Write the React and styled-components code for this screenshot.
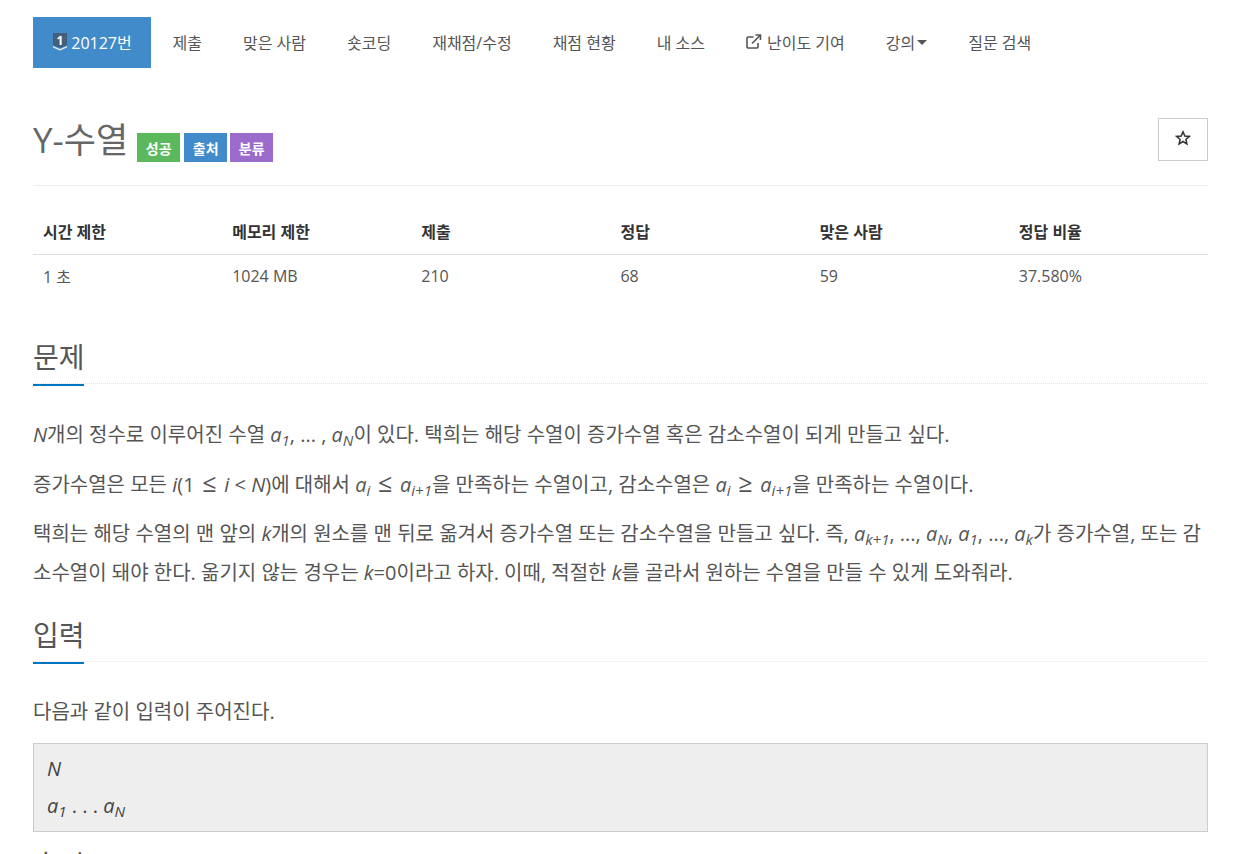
import styled, { createGlobalStyle } from "styled-components";

const GlobalStyle = createGlobalStyle`
    html, body {
        margin: 0;
        padding: 0;
        background: #fff;
        overflow: hidden;
    }
    body {
        font-family: "Open Sans", "Noto Sans CJK KR", sans-serif;
        color: #555;
        font-size: 20px;
    }
`;

const Page = styled.div`
    width: 1257px;
    height: 854px;
    overflow: hidden;
    padding: 17px 49px 0 33px;
    box-sizing: border-box;
`;

const Nav = styled.nav`
    display: flex;
    height: 51px;
    align-items: center;
`;

const Brand = styled.a`
    display: flex;
    align-items: center;
    justify-content: center;
    gap: 3px;
    width: 118px;
    height: 51px;
    margin-right: 1px;
    padding-bottom: 2px;
    box-sizing: border-box;
    background: #428bca;
    color: #fff;
    font-size: 16px;
`;

const NavItem = styled.a`
    display: flex;
    align-items: center;
    gap: ${({ $gap }) => $gap || 0}px;
    padding: 0 20.5px 2px;
    font-size: 16px;
    color: #555;
    white-space: nowrap;
`;

const Caret = styled.span`
    display: inline-block;
    margin-left: 2px;
    margin-top: 2px;
    border-top: 5px solid #555;
    border-left: 5px solid transparent;
    border-right: 5px solid transparent;
`;

const TitleRow = styled.div`
    display: flex;
    align-items: flex-end;
    margin-top: 49px;
    padding-bottom: 23px;
    border-bottom: 1px solid #eee;
`;

const Title = styled.h1`
    margin: 0 9px 0 0;
    font-size: 35px;
    line-height: 45px;
    font-weight: 400;
    color: #666;
`;

const Label = styled.span`
    display: flex;
    align-items: center;
    justify-content: center;
    width: 43px;
    height: 29px;
    margin-right: 3px;
    font-size: 14px;
    font-weight: 700;
    color: #fff;
    background: ${({ $color }) => $color};

    &:nth-child(2) {
        margin-right: 4px;
    }
`;

const StarButton = styled.button`
    display: flex;
    align-items: center;
    justify-content: center;
    width: 50px;
    height: 43px;
    margin-left: auto;
    margin-bottom: 1px;
    padding: 0 0 3px;
    background: #fff;
    border: 1px solid #ccc;
    color: #333;
`;

const InfoTable = styled.table`
    width: 100%;
    margin-top: 21px;
    border-collapse: collapse;
    table-layout: fixed;
    font-size: 16px;
    color: #555;

    th, td {
        padding: 0 10px;
        text-align: left;
    }
    th {
        height: 47px;
        color: #333;
        font-weight: 700;
        border-bottom: 1px solid #ddd;
    }
    td {
        height: 42px;
    }
`;

const NarrowCol = styled.col`
    width: 189px;
`;

const WideCol = styled.col`
    width: 199px;
`;

const Section = styled.section`
    margin-top: ${({ $top }) => $top}px;
`;

const Heading = styled.div`
    border-bottom: 1px dotted #e5e5e5;
    height: 43px;
    margin-bottom: 31px;
    position: relative;

    &::after {
        content: "";
        position: absolute;
        left: 0;
        bottom: -3px;
        width: 51px;
        height: 2px;
        background: #0076c0;
    }
`;

const HeadingText = styled.h2`
    margin: 0;
    font-size: 28px;
    line-height: 35px;
    font-weight: 400;
    color: #555;
`;

const Para = styled.p`
    margin: 0 0 10px;
    font-size: 20px;
    line-height: 39px;
    color: #555;
    white-space: nowrap;
`;

const LeadPara = styled(Para)`
    margin-bottom: 11px;
`;

const InputLine = styled(Para)`
    line-height: 37px;
    margin-bottom: 13px;
`;

const Math = styled.i`
    font-style: italic;
`;

const Sub = styled.sub`
    font-size: 15px;
    font-style: italic;
    line-height: 0;
    vertical-align: -4px;
`;

const Rel = styled.span`
    margin: 0 2.5px;
    font-size: 25px;
    line-height: 0;
`;

const Formula = styled.div`
    background: #eee;
    border: 1px solid #ccc;
    padding: 6px 13px 7px;
    margin-top: 12px;
    font-size: 20px;
    line-height: 37px;
    color: #444;
`;

function TierIcon() {
    return (
        <svg width="16" height="18" viewBox="0 0 16 18">
            <path d="M1 0h14v12l-7 3-7-3z" fill="#435f7a" />
            <path d="M1 13l7 3 7-3v1.5l-7 3-7-3z" fill="#e6ebf0" />
            <text x="8" y="11.5" textAnchor="middle" fontSize="12" fontWeight="700" fill="#fff" fontFamily="Open Sans">1</text>
        </svg>
    );
}

function LinkIcon() {
    return (
        <svg width="16" height="15" viewBox="0 0 16 15" fill="none" stroke="#555" strokeWidth="1.6">
            <path d="M7.5 3H2.5A1.5 1.5 0 0 0 1 4.5v8A1.5 1.5 0 0 0 2.5 14h8a1.5 1.5 0 0 0 1.5-1.5V9" />
            <path d="M6 9.5L14 1.5M9.5 1h5v5" />
        </svg>
    );
}

function StarIcon() {
    return (
        <svg width="16" height="16" viewBox="0 0 16 16" fill="none" stroke="#333" strokeWidth="1.5">
            <path d="M8 1.8l1.8 4.2 4.5.4-3.4 3 1 4.5L8 11.5l-3.9 2.4 1-4.5-3.4-3 4.5-.4z" />
        </svg>
    );
}

const menu = ["제출", "맞은 사람", "숏코딩", "재채점/수정", "채점 현황", "내 소스"];

export default function App() {
    return (
        <Page>
            <GlobalStyle />
            <Nav>
                <Brand><TierIcon />20127번</Brand>
                {menu.map((m) => <NavItem key={m}>{m}</NavItem>)}
                <NavItem $gap={5}><LinkIcon />난이도 기여</NavItem>
                <NavItem>강의<Caret /></NavItem>
                <NavItem>질문 검색</NavItem>
            </Nav>

            <TitleRow>
                <Title>Y-수열</Title>
                <Label $color="#5cb85c">성공</Label>
                <Label $color="#428bca">출처</Label>
                <Label $color="#9b6bcc">분류</Label>
                <StarButton><StarIcon /></StarButton>
            </TitleRow>

            <InfoTable>
                <colgroup>
                    <NarrowCol />
                    <NarrowCol />
                    <WideCol />
                    <WideCol />
                    <WideCol />
                    <WideCol />
                </colgroup>
                <thead>
                    <tr>
                        <th>시간 제한</th>
                        <th>메모리 제한</th>
                        <th>제출</th>
                        <th>정답</th>
                        <th>맞은 사람</th>
                        <th>정답 비율</th>
                    </tr>
                </thead>
                <tbody>
                    <tr>
                        <td>1 초</td>
                        <td>1024 MB</td>
                        <td>210</td>
                        <td>68</td>
                        <td>59</td>
                        <td>37.580%</td>
                    </tr>
                </tbody>
            </InfoTable>

            <Section $top={43}>
                <Heading><HeadingText>문제</HeadingText></Heading>
                <LeadPara>
                    <Math>N</Math>개의 정수로 이루어진 수열 <Math>a</Math><Sub>1</Sub>, ... , <Math>a</Math><Sub>N</Sub>이 있다. 택희는 해당 수열이 증가수열 혹은 감소수열이 되게 만들고 싶다.
                </LeadPara>
                <Para>
                    증가수열은 모든 <Math>i</Math>(1 <Rel>≤</Rel> <Math>i</Math> &lt; <Math>N</Math>)에 대해서 <Math>a</Math><Sub>i</Sub> <Rel>≤</Rel> <Math>a</Math><Sub>i+1</Sub>을 만족하는 수열이고, 감소수열은 <Math>a</Math><Sub>i</Sub> <Rel>≥</Rel> <Math>a</Math><Sub>i+1</Sub>을 만족하는 수열이다.
                </Para>
                <Para>
                    택희는 해당 수열의 맨 앞의 <Math>k</Math>개의 원소를 맨 뒤로 옮겨서 증가수열 또는 감소수열을 만들고 싶다. 즉, <Math>a</Math><Sub>k+1</Sub>, ..., <Math>a</Math><Sub>N</Sub>, <Math>a</Math><Sub>1</Sub>, ..., <Math>a</Math><Sub>k</Sub>가 증가수열, 또는 감<br />
                    소수열이 돼야 한다. 옮기지 않는 경우는 <Math>k</Math>=0이라고 하자. 이때, 적절한 <Math>k</Math>를 골라서 원하는 수열을 만들 수 있게 도와줘라.
                </Para>
            </Section>

            <Section $top={26}>
                <Heading><HeadingText>입력</HeadingText></Heading>
                <InputLine>다음과 같이 입력이 주어진다.</InputLine>
                <Formula>
                    <div><Math>N</Math></div>
                    <div><Math>a</Math><Sub>1</Sub> . . . <Math>a</Math><Sub>N</Sub></div>
                </Formula>
            </Section>

            <Section $top={16}>
                <HeadingText>출력</HeadingText>
            </Section>
        </Page>
    );
}
